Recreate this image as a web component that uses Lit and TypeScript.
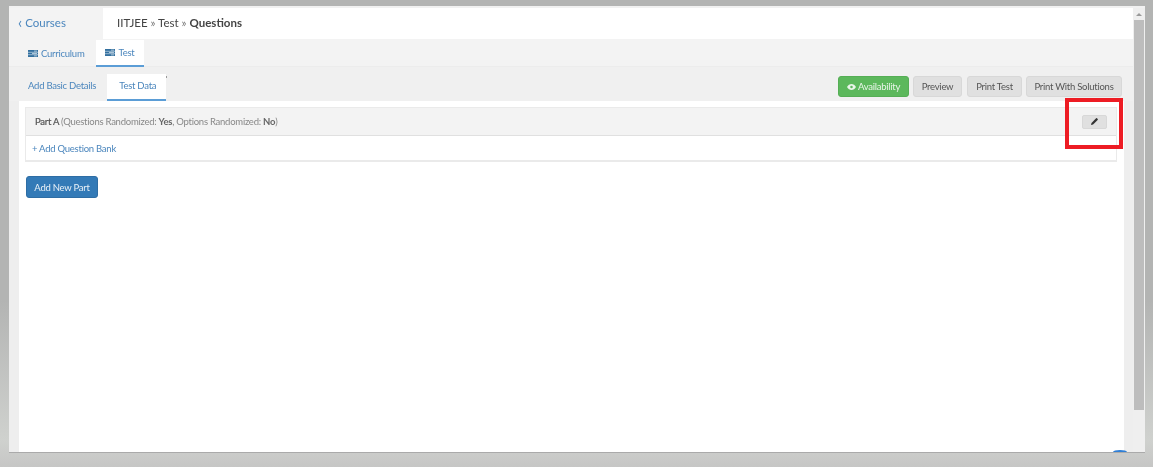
import { LitElement, html, css, svg } from "lit";
import { customElement } from "lit/decorators.js";

const listIcon = svg`<svg class="ico" viewBox="0 0 10 7" width="10" height="7"><rect width="10" height="7" fill="#33709f"/><path d="M0 2.300h10M0 4.700h10" stroke="#dfe9f1" stroke-width=".6"/><path d="M6 1.100h3M4 3.500h5M6 5.900h3" stroke="#dfe9f1" stroke-width=".7"/></svg>`;

@customElement("app-root")
export class AppRoot extends LitElement {
  static styles = css`
    :host {
      display: block;
      position: relative;
      width: 1153px;
      height: 467px;
      overflow: hidden;
      font-family: Lato, "Open Sans", sans-serif;
      font-size: 9.500px;
      letter-spacing: -0.250px;
      color: #555;
      background: linear-gradient(#b3b4b3 0, #b3b4b3 300px, #cfd1ce 440px, #c6c6c5 467px);
    }
    .page { padding: 6px 8px 0 9px; display: flex; flex-direction: column; height: 467px; box-sizing: border-box; filter: blur(0.35px); }
    .frame {
      height: 447px;
      box-sizing: border-box;
      border-top: 2px solid #f1f1f1;
      background: #fff;
      display: grid;
      grid-template-columns: 1fr 12px;
      border-bottom: 1px solid #aaa;
    }
    .main { display: flex; flex-direction: column; min-width: 0; background: #eee; }
    .top { display: flex; height: 31px; background: #f3f3f3; }
    .back { width: 94px; padding: 8px 0 0 9px; box-sizing: border-box; font-size: 11.500px; letter-spacing: 0; color: #4b86bd; display: flex; align-items: flex-start; }
    .chev { font-size: 15px; line-height: 13px; margin-right: 3px; }
    .crumbs { flex: 1; background: #fff; height: 31px; padding: 8px 0 0 14px; box-sizing: border-box; font-size: 11.500px; letter-spacing: 0; color: #444; }
    .crumbs b { font-weight: 700; }
    .crumbs .sep { color: #777; }
    .tabs1 { display: flex; height: 28px; background: #f3f3f3; border-bottom: 1px solid #ececec; box-sizing: border-box; padding-left: 10px; }
    .tab1 { display: flex; align-items: center; gap: 3px; padding: 1px 12px 0 9px; color: #4b86bd; box-sizing: border-box; height: 27px; }
    .tab1.on { background: #fff; border-bottom: 2px solid #5b9dd6; margin-top: 1px; padding: 0 10px 0 9px; height: 27px; }
    .ico { display: block; }
    .bar2 { display: flex; align-items: flex-start; justify-content: space-between; height: 34px; background: #f0f0f0; padding-left: 10px; }
    .tabs2 { display: flex; }
    .tab2 { padding: 13px 10px 0 9px; height: 34px; box-sizing: border-box; color: #4b86bd; white-space: nowrap; }
    .tab2.on { position: relative; width: 59px; margin-left: 1px; padding-left: 12px; background: #fff; border-bottom: 2px solid #5b9dd6; margin-top: 7px; height: 27px; padding-top: 6px; }
    .tick { position: absolute; right: -1px; top: 2px; width: 1.500px; height: 1.500px; background: #999; }
    .actions { display: flex; gap: 4px; margin: 9px 11px 0 0; }
    .btn {
      height: 21px; box-sizing: border-box; border: 1px solid #d8d8d8; border-radius: 3px;
      background: #e0e0e0; color: #555; display: flex; align-items: center; justify-content: center;
      white-space: nowrap;
    }
    .avail { width: 71px; background: #5cb85c; border-color: #55ae55; color: #e9f5e9; gap: 2px; }
    .preview { width: 49px; }
    .printt { width: 55px; margin-left: 1px; }
    .prints { width: 96px; }
    .content { flex: 1; margin: 0 9px 0 10px; background: #fff; padding: 6px 7px 0 6px; display: flex; flex-direction: column; align-items: flex-start; }
    .card { width: 100%; height: 55px; box-sizing: border-box; border: 1px solid #eaeaea; border-bottom-width: 2px; }
    .card-head {
      height: 28px; box-sizing: border-box; background: #f3f3f3; border-bottom: 1px solid #e0e0e0;
      display: flex; align-items: center; justify-content: space-between; padding: 0 9px 0 9px;
      color: #888;
    }
    .card-head strong { color: #555; font-weight: 400; -webkit-text-stroke: 0.2px #555; }
    .card-head b { color: #666; font-weight: 700; }
    .edit { width: 25px; height: 14px; box-sizing: border-box; background: #e0e0e0; border: 1px solid #d8d8d8; border-radius: 2px; display: flex; align-items: center; justify-content: center; }
    .card-body { padding: 7px 0 0 6px; color: #4b86bd; }
    .add { margin-top: 14px; margin-left: 1px; width: 72px; height: 22px; border-radius: 3px; background: #337ab7; border: 1px solid #2e6da4; box-sizing: border-box; color: #e8f0f7; display: flex; align-items: center; justify-content: center; }
    .scroll { background: #eee; }
    .track { display: flex; flex-direction: column; align-items: center; background: #efefef; height: 100%; }
    .arrow { width: 0; height: 0; border: 3px solid transparent; border-bottom: 3px solid #999; border-top: 0; margin: 5px 0 4px; }
    .thumb { width: 10px; height: 390px; background: #bdbdbd; }
    .note { position: absolute; left: 1065px; top: 98px; width: 58px; height: 51px; box-sizing: border-box; border: 4px solid #ed1c24; filter: blur(0.35px); }
    .chat { position: absolute; left: 1113px; top: 450px; width: 14px; height: 2px; border-radius: 50% 50% 0 0 / 100% 100% 0 0; background: #2f7fd6; }
  `;

  render() {
    return html`
      <div class="page">
        <div class="frame">
          <div class="main">
            <div class="top">
              <div class="back"><span class="chev">‹</span>Courses</div>
              <div class="crumbs">IITJEE <span class="sep">»</span> Test <span class="sep">»</span> <b>Questions</b></div>
            </div>
            <div class="tabs1">
              <div class="tab1">${listIcon}Curriculum</div>
              <div class="tab1 on">${listIcon}Test</div>
            </div>
            <div class="bar2">
              <div class="tabs2">
                <div class="tab2">Add Basic Details</div>
                <div class="tab2 on">Test Data<span class="tick"></span></div>
              </div>
              <div class="actions">
                <div class="btn avail">
                  <svg viewBox="0 0 12 8" width="9" height="6"><path d="M0 4c1.500-2.500 3.500-4 6-4s4.500 1.500 6 4c-1.500 2.500-3.500 4-6 4S1.500 6.500 0 4z" fill="#e9f5e9"/><circle cx="6" cy="4" r="1.700" fill="#5cb85c"/></svg>
                  Availability
                </div>
                <div class="btn preview">Preview</div>
                <div class="btn printt">Print Test</div>
                <div class="btn prints">Print With Solutions</div>
              </div>
            </div>
            <div class="content">
              <div class="card">
                <div class="card-head">
                  <span><strong>Part A</strong> (Questions Randomized: <b>Yes</b>, Options Randomized: <b>No</b>)</span>
                  <div class="edit">
                    <svg viewBox="0 0 8 8" width="7" height="7"><path d="M0 8l.6-2.400L5.800.4a.8.8 0 0 1 1.100 0l.7.7a.8.8 0 0 1 0 1.100L2.400 7.400z" fill="#333"/></svg>
                  </div>
                </div>
                <div class="card-body">+ Add Question Bank</div>
              </div>
              <div class="add">Add New Part</div>
            </div>
          </div>
          <div class="scroll">
            <div class="track"><div class="arrow"></div><div class="thumb"></div></div>
          </div>
        </div>
      </div>
      <div class="note"></div>
      <div class="chat"></div>
    `;
  }
}
